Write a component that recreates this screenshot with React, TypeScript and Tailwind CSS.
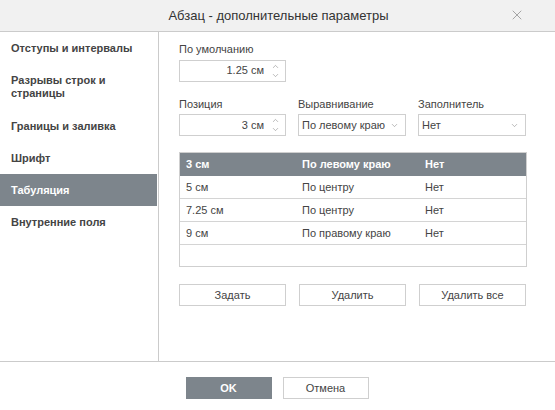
import { X, ChevronUp, ChevronDown } from "lucide-react";

const navItems = [
  { label: "Отступы и интервалы", h: "h-[32px]" },
  { label: "Разрывы строк и страницы", h: "h-[46px]" },
  { label: "Границы и заливка", h: "h-[32px]" },
  { label: "Шрифт", h: "h-[32px]" },
  { label: "Табуляция", h: "h-[32px]", active: true },
  { label: "Внутренние поля", h: "h-[32px]" },
];

const tabs = [
  { pos: "3 см", align: "По левому краю", leader: "Нет", selected: true },
  { pos: "5 см", align: "По центру", leader: "Нет" },
  { pos: "7.25 см", align: "По центру", leader: "Нет" },
  { pos: "9 см", align: "По правому краю", leader: "Нет" },
];

function Spinner({ value }: { value: string }) {
  return (
    <div className="flex items-center w-[107px] h-[22px] border border-[#cfcfcf] bg-white">
      <span className="flex-1 text-right pr-[4px]">{value}</span>
      <div className="flex flex-col items-center w-[14px] mr-[3px] text-[#888]">
        <ChevronUp size={9} strokeWidth={1.5} />
        <ChevronDown size={9} strokeWidth={1.5} />
      </div>
    </div>
  );
}

function Select({ value }: { value: string }) {
  return (
    <div className="flex items-center w-[108px] h-[22px] border border-[#cfcfcf] bg-white pl-[3px] pr-[6px]">
      <span className="flex-1">{value}</span>
      <ChevronDown size={9} strokeWidth={1.5} className="text-[#888]" />
    </div>
  );
}

export default function App() {
  return (
    <div className="w-[555px] h-[410px] bg-white text-[#444] text-[11px] flex flex-col" style={{ fontFamily: '"Liberation Sans", Arial, sans-serif' }}>
      <div className="relative h-[32px] bg-[#f1f1f1] border-b border-[#cbcbcb] flex items-center justify-center shrink-0">
        <span className="text-[13px] text-[#333] pl-[2px]">Абзац - дополнительные параметры</span>
        <X size={16} strokeWidth={1.1} className="absolute right-[30px] top-[7px] text-[#888]" />
      </div>

      <div className="flex h-[330px] border-b border-[#cbcbcb]">
        <div className="w-[159px] border-r border-[#cbcbcb] pr-px">
          {navItems.map((n) => (
            <div
              key={n.label}
              className={`${n.h} flex items-center px-[11px] font-bold leading-[13px] ${n.active ? "bg-[#7d858c] text-white" : "text-[#444]"}`}
            >
              <span className={n.label.startsWith("Разрывы") ? "w-[110px]" : ""}>{n.label}</span>
            </div>
          ))}
        </div>

        <div className="flex-1 pl-[20px] pt-[9px]">
          <div className="flex flex-col gap-[2px]">
            <span>По умолчанию</span>
            <Spinner value="1.25 см" />
          </div>

          <div className="flex gap-[12px] mt-[14px]">
            <div className="flex flex-col gap-[2px]">
              <span>Позиция</span>
              <Spinner value="3 см" />
            </div>
            <div className="flex flex-col gap-[2px]">
              <span>Выравнивание</span>
              <Select value="По левому краю" />
            </div>
            <div className="flex flex-col gap-[2px]">
              <span>Заполнитель</span>
              <Select value="Нет" />
            </div>
          </div>

          <div className="mt-[16px] w-[348px] h-[115px] border border-[#cfcfcf]">
            {tabs.map((t) => (
              <div
                key={t.pos}
                className={`flex items-center h-[23px] border-b ${t.selected ? "bg-[#7d858c] text-white font-bold border-[#7d858c]" : "border-[#d4d4d4]"}`}
              >
                <span className="w-[122px] pl-[6px]">{t.pos}</span>
                <span className="w-[122px]">{t.align}</span>
                <span className="pl-px">{t.leader}</span>
              </div>
            ))}
          </div>

          <div className="flex gap-[13px] mt-[17px]">
            {["Задать", "Удалить", "Удалить все"].map((b) => (
              <div key={b} className="w-[107px] h-[22px] border border-[#cfcfcf] flex items-center justify-center">
                {b}
              </div>
            ))}
          </div>
        </div>
      </div>

      <div className="flex justify-center gap-[11px] pt-[15px] pr-[1px]">
        <div className="w-[86px] h-[22px] bg-[#7d858c] text-white font-bold flex items-center justify-center">OK</div>
        <div className="w-[86px] h-[22px] border border-[#cfcfcf] flex items-center justify-center">Отмена</div>
      </div>
    </div>
  );
}
